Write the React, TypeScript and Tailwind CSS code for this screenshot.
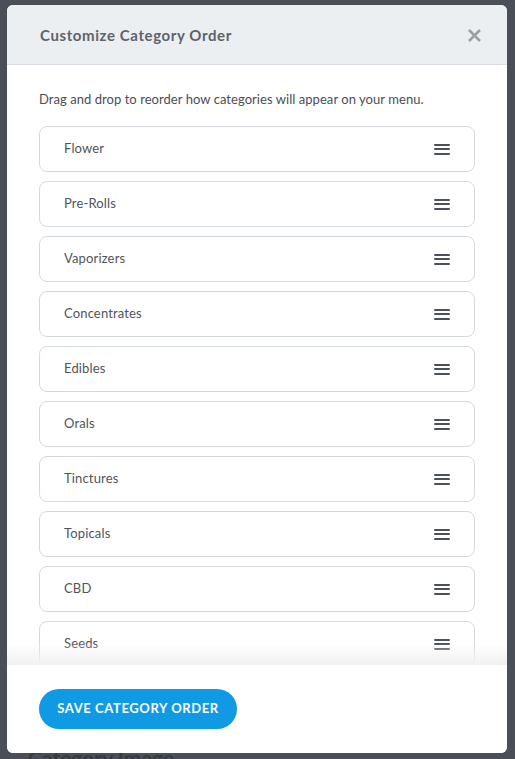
import React from "react";

const CATEGORIES = [
  "Flower",
  "Pre-Rolls",
  "Vaporizers",
  "Concentrates",
  "Edibles",
  "Orals",
  "Tinctures",
  "Topicals",
  "CBD",
  "Seeds",
];

function DragHandle() {
  return (
    <div className="flex flex-col gap-[2.5px] w-[16px]">
      <span className="block h-[2px] bg-[#4b5059] rounded-[1px]" />
      <span className="block h-[2px] bg-[#4b5059] rounded-[1px]" />
      <span className="block h-[2px] bg-[#4b5059] rounded-[1px]" />
    </div>
  );
}

function CategoryRow({ name }: { name: string }) {
  return (
    <div className="flex items-center justify-between h-[46px] shrink-0 rounded-[8px] border border-[#d5d9df] bg-white pl-[24px] pr-[24px]">
      <span className="text-[13px] text-[#50545b] tracking-[0.15px]">{name}</span>
      <DragHandle />
    </div>
  );
}

export default function App() {
  return (
    <div
      className="relative w-full h-screen overflow-hidden bg-[#4a4e56]"
      style={{ fontFamily: "Lato, 'Open Sans', Arial, sans-serif" }}
    >
      {/* page behind the overlay */}
      <div className="pt-[742px] pl-[28px]">
        <h2 className="text-[21px] font-bold text-[#363a41]">Category Image</h2>
      </div>

      {/* Modal */}
      <div className="absolute left-[7px] top-[5px] w-[500px] h-[748px] rounded-[6px] bg-white flex flex-col overflow-hidden">
        <div className="h-[60px] shrink-0 bg-[#eceff2] border-b border-[#d9dde2] flex items-center justify-between pl-[33px] pr-[25px]">
          <h1 className="text-[15px] font-bold text-[#5d636b] pt-[1px] tracking-[0.6px]">Customize Category Order</h1>
          <svg width="15" height="15" viewBox="0 0 15 15" className="mt-[1px]">
            <path d="M2 2 L13 13 M13 2 L2 13" stroke="#9b9ea2" strokeWidth="2.6" strokeLinecap="butt" />
          </svg>
        </div>

        <div className="relative flex-1 overflow-hidden px-[32px] pt-[26px]">
          <p className="text-[13px] text-[#4a4e55] leading-[16px] tracking-[0.05px]">
            Drag and drop to reorder how categories will appear on your menu.
          </p>
          <div className="mt-[19px] flex flex-col gap-[9px]">
            {CATEGORIES.map((c) => (
              <CategoryRow key={c} name={c} />
            ))}
          </div>
          <div className="absolute left-0 right-0 bottom-0 h-[22px] bg-gradient-to-b from-white/0 to-[#f1f1f1]" />
        </div>

        <div className="h-[88px] shrink-0 bg-white pl-[32px] pt-[24px]">
          <button className="h-[40px] w-[198px] rounded-full bg-[#0f9ae3] text-white text-[13px] font-bold uppercase tracking-[0.6px]">
            Save Category Order
          </button>
        </div>
      </div>
    </div>
  );
}
